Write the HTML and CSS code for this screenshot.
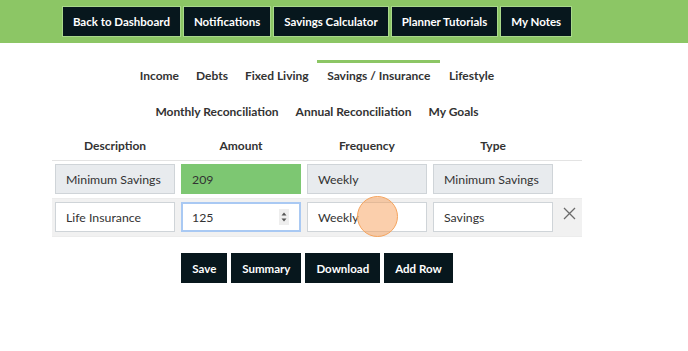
FILE: index.html
```html
<!DOCTYPE html>
<html>
<head>
<meta charset="utf-8">
<link rel="stylesheet" href="styles.css">
</head>
<body>
<header class="topbar">
  <nav class="topbar-inner">
    <a class="btn top-btn">Back to Dashboard</a>
    <a class="btn top-btn">Notifications</a>
    <a class="btn top-btn">Savings Calculator</a>
    <a class="btn top-btn">Planner Tutorials</a>
    <a class="btn top-btn">My Notes</a>
  </nav>
</header>
<main class="page">
  <nav class="tabs">
    <a class="tab">Income</a>
    <a class="tab">Debts</a>
    <a class="tab">Fixed Living</a>
    <a class="tab active">Savings / Insurance</a>
    <a class="tab">Lifestyle</a>
    <a class="tab">Monthly Reconciliation</a>
    <a class="tab">Annual Reconciliation</a>
    <a class="tab">My Goals</a>
  </nav>
  <table class="grid">
    <thead>
      <tr>
        <th>Description</th>
        <th>Amount</th>
        <th>Frequency</th>
        <th>Type</th>
        <th class="col-x"></th>
      </tr>
    </thead>
    <tbody>
      <tr>
        <td><div class="field readonly">Minimum Savings</div></td>
        <td><div class="field green">209</div></td>
        <td><div class="field readonly">Weekly</div></td>
        <td><div class="field readonly">Minimum Savings</div></td>
        <td class="col-x"></td>
      </tr>
      <tr class="shaded">
        <td><div class="field">Life Insurance</div></td>
        <td><div class="field focus">125
          <span class="spinner"><svg width="10" height="16" viewBox="0 0 10 16"><path d="M2.5 6.5 L5 3.5 L7.5 6.5 Z" fill="#555"/><path d="M2.5 9.5 L5 12.5 L7.5 9.5 Z" fill="#555"/></svg></span>
        </div></td>
        <td><div class="field">Weekly</div></td>
        <td><div class="field">Savings</div></td>
        <td class="col-x"><svg class="xicon" width="13" height="13" viewBox="0 0 13 13"><path d="M1 1 L12 12 M12 1 L1 12" stroke="#6b6b6b" stroke-width="1.3" fill="none"/></svg></td>
      </tr>
    </tbody>
  </table>
  <div class="actions">
    <a class="btn act-btn">Save</a>
    <a class="btn act-btn">Summary</a>
    <a class="btn act-btn">Download</a>
    <a class="btn act-btn">Add Row</a>
  </div>
  <div class="click-dot"></div>
</main>
</body>
</html>
```
FILE: styles.css
```css
* { box-sizing: border-box; }
body {
  margin: 0;
  font-family: Lato, "Open Sans", sans-serif;
  color: #333;
  background: #fff;
}
.topbar {
  background: #8cc665;
  height: 43px;
  padding: 6px 0;
}
.topbar-inner {
  width: 634px;
  display: flex;
  justify-content: center;
  gap: 2px;
}
.btn {
  display: flex;
  align-items: center;
  justify-content: center;
  background: #07171d;
  color: #fff;
  font-weight: 700;
  font-size: 11.5px;
}
.top-btn {
  height: 31px;
  padding: 0 10px;
  border: 1px solid #a9d98b;
}
.page {
  width: 634px;
  position: relative;
  padding-top: 17px;
}
.tabs {
  width: 400px;
  margin: 0 auto;
  display: flex;
  flex-wrap: wrap;
  justify-content: center;
}
.tab {
  font-size: 12px;
  font-weight: 700;
  line-height: 14px;
  padding: 6px 8.5px 13px;
  border-top: 3px solid transparent;
  color: #333;
}
.tab.active { border-top-color: #8cc665; padding: 6px 10px 13px; }
.grid {
  width: 530px;
  margin: 0 auto;
  border-collapse: collapse;
  table-layout: fixed;
}
.grid th {
  font-size: 12px;
  font-weight: 700;
  line-height: 14px;
  padding: 7px 3px;
  width: 126px;
  border-bottom: 1px solid #e3e3e3;
}
.grid th.col-x { width: 26px; }
.grid td {
  padding: 3px 3px 4px;
  vertical-align: middle;
}
.grid tbody tr { border-bottom: 1px solid #ececec; }
.grid tr.shaded { background: #f1f1f1; }
.field {
  position: relative;
  height: 30px;
  display: flex;
  align-items: center;
  padding: 0 10px;
  font-size: 12.3px;
  color: #333;
  background: #fff;
  border: 1px solid #cfd4d8;
  white-space: nowrap;
}
.field.readonly { background: #e8ebee; }
.field.green { background: #7dc772; border-color: #7dc772; }
.field.focus {
  border: 2px solid #a9c9f3;
  padding-left: 9px;
}
.spinner {
  position: absolute;
  right: 10px;
  top: 5px;
  width: 10px;
  height: 16px;
  background: #eee;
  display: flex;
}
.col-x { text-align: center; }
.xicon { display: block; margin: 0 auto 8px; }
.actions {
  display: flex;
  justify-content: center;
  gap: 4px;
  margin-top: 16px;
}
.act-btn {
  height: 30px;
  padding: 0 11px;
}
.click-dot {
  position: absolute;
  left: 357px;
  top: 153px;
  width: 41px;
  height: 41px;
  border-radius: 50%;
  background: rgba(248, 160, 90, 0.5);
  border: 1.5px solid #f5a45e;
}
```
